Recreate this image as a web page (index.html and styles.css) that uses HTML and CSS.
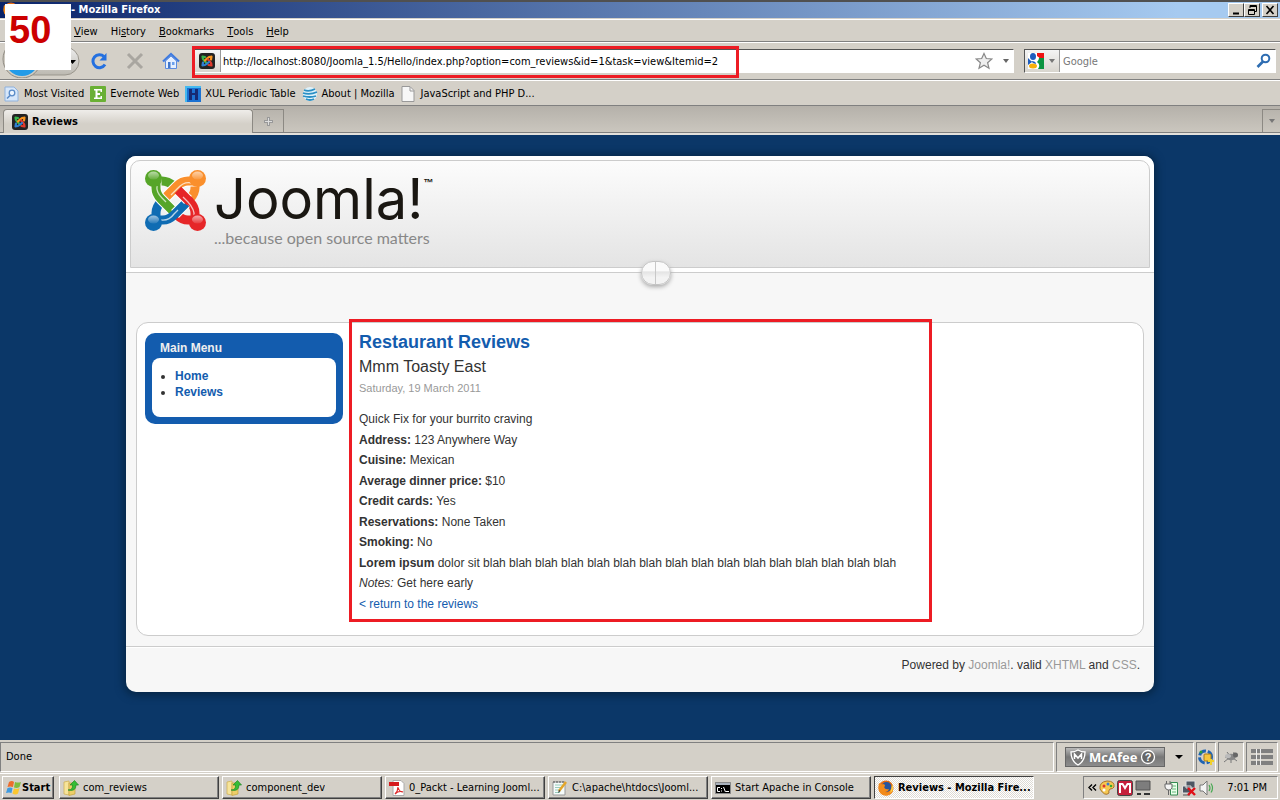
FILE: index.html
```html
<!DOCTYPE html>
<html lang="en">
<head>
<meta charset="utf-8">
<title>Reviews - Mozilla Firefox</title>
<link rel="stylesheet" href="styles.css">
</head>
<body>
<svg class="defs" aria-hidden="true">
  <defs>
    <linearGradient id="ball" x1="0" y1="0" x2="0" y2="1"><stop offset="0" stop-color="#fff" stop-opacity=".6"/><stop offset="1" stop-color="#fff" stop-opacity=".1"/></linearGradient>
    <linearGradient id="key" x1="0" y1="0" x2="0" y2="1"><stop offset="0" stop-color="#eee"/><stop offset="1" stop-color="#bbb8b0"/></linearGradient>
  </defs>
  <symbol id="knot" viewBox="0 0 61 61">
    <g fill="none" stroke-width="9">
      <path stroke="#56a528" d="M8 11H17Q23 11 29 16"/>
      <path stroke="#fa8f2c" d="M50 8V18Q50 23 45 29"/>
      <path stroke="#e62628" d="M52 50H43Q37 50 32 45"/>
      <path stroke="#0f6cb3" d="M11 52V43Q11 37 16 32"/>
      <path stroke="#e62628" d="M50 52V43Q50 37 45 32L34 21"/>
      <path stroke="#fff" stroke-width="11" d="M52 11H43Q37 11 32 16L20 28"/>
      <path stroke="#fa8f2c" d="M52 11H43Q37 11 32 16L20 28"/>
      <path stroke="#fff" stroke-width="11" d="M11 8V18Q11 24 16 29L28 41"/>
      <path stroke="#56a528" d="M11 8V18Q11 24 16 29L28 41"/>
      <path stroke="#fff" stroke-width="11" d="M30 44L41 33"/>
      <path stroke="#0f6cb3" d="M8 50H18Q24 50 29 45L41 33"/>
      <path stroke="#fff" stroke-width="11" d="M43 30L34 21"/>
      <path stroke="#e62628" d="M45 32L33 20"/>
      <g stroke="#fff" stroke-opacity=".7" stroke-width="1.300"><path d="M12 16Q11 22 17 28L21 32M47 13Q39 11 33 18L26 25M49 46Q50 40 43 32L38 27M16 50Q24 51 29 44L33 40"/></g>
    </g>
    <circle cx="8.500" cy="8.500" r="8.500" fill="#56a528"/><circle cx="52.500" cy="8.500" r="8.500" fill="#fa8f2c"/>
    <circle cx="8.500" cy="52.500" r="8.500" fill="#0f6cb3"/><circle cx="52.500" cy="52.500" r="8.500" fill="#e62628"/>
    <g fill="url(#ball)"><ellipse cx="8.500" cy="5.500" rx="5.500" ry="4"/><ellipse cx="52.500" cy="5.500" rx="5.500" ry="4"/><ellipse cx="8.500" cy="49.500" rx="5.500" ry="4"/><ellipse cx="52.500" cy="49.500" rx="5.500" ry="4"/></g>
  </symbol>
  <symbol id="favicon" viewBox="0 0 16 16">
    <rect width="16" height="16" rx="3" fill="#222"/>
    <g fill="none" stroke-width="2.200" stroke-linecap="round">
      <path stroke="#37b34a" d="M3.500 3.500Q3.500 6 5 7.500L8 10.500M3.500 3.500L6 4"/>
      <path stroke="#f8941e" d="M12.500 3.500Q10 3.500 8 5.500L6 7.500M12.500 3.500L12 6.500"/>
      <path stroke="#e23a2c" d="M12.500 12.500Q12.500 10 11 8.500L9 6.500M12.500 12.500L9.500 12"/>
      <path stroke="#2f7fd0" d="M3.500 12.500Q6 12.500 7.500 11L10 9M3.500 12.500L4 9.500"/>
    </g>
  </symbol>
  <symbol id="firefox" viewBox="0 0 16 16">
    <circle cx="8" cy="8" r="7.500" fill="#e26a12"/><circle cx="8.500" cy="7" r="5" fill="#27549c"/>
    <path d="M1 3Q4 5 6 4Q8 6 6 7Q7 10 11 9Q10 12 7 12Q12 14 14 6Q17 12 11 15Q4 17 1 11Q0 7 1 3Z" fill="#f28a1a"/>
    <path d="M14 4Q17 10 12 13Q14 8 14 4Z" fill="#fcd34a"/>
  </symbol>
  <symbol id="folder" viewBox="0 0 16 16">
    <path d="M1 2L6 1V15L1 14Z" fill="#f6e49a" stroke="#cdae4c" stroke-width=".7"/>
    <path d="M6 3H12V14L6 15.500Z" fill="#edcf69" stroke="#c6a23e" stroke-width=".7"/>
    <path d="M5 10Q10 10 9.500 5H7L11.500.500L15.500 5H13Q13 12 5 10Z" fill="#35bd36" stroke="#208a27" stroke-width=".7"/>
  </symbol>
</svg>

<header class="chrome">
  <div class="titlebar">
    <svg class="icon" aria-hidden="true"><use href="#firefox"/></svg>
    <span class="window-title">- Mozilla Firefox</span>
    <div class="window-buttons">
      <button aria-label="Minimize"><svg width="12" height="10"><path d="M3 8.500H9" stroke="#000" stroke-width="2"/></svg></button>
      <button aria-label="Restore"><svg width="12" height="10" fill="none" stroke="#000"><path d="M4 3V.5H10.500V6.500H8M4 1.500H10M2.500 4.500H8.500V9.500H2.500ZM2 5.500H8"/></svg></button>
      <button class="close" aria-label="Close"><svg width="12" height="10"><path d="M2.500 1L9.500 9M9.500 1L2.500 9" stroke="#000" stroke-width="1.600"/></svg></button>
    </div>
  </div>

  <nav class="menubar" aria-label="Application menu">
    <button><u>V</u>iew</button><button>Hi<u>s</u>tory</button><button><u>B</u>ookmarks</button><button><u>T</u>ools</button><button><u>H</u>elp</button>
  </nav>

  <div class="navbar">
    <button class="nav-history" aria-label="Back">
      <svg width="82" height="34"><rect x="20" y="3" width="59" height="28" rx="14" fill="url(#key)" stroke="#9b978e"/><circle cx="22" cy="15" r="19" fill="#d0ccc3" stroke="#8e8a82"/><circle cx="22" cy="15" r="17" fill="#229be8"/><path d="M69 16H76L72.500 20Z"/></svg>
    </button>
    <button class="tool" aria-label="Reload"><svg width="18" height="18"><path d="M14 4.500A6.500 6.500 0 1 0 15 12.500" fill="none" stroke="#2470e0" stroke-width="3"/><path d="M16.500 1V8.500H9.500Z" fill="#2470e0"/></svg></button>
    <button class="tool" aria-label="Stop"><svg width="18" height="18"><path d="M2 2L16 16M16 2L2 16" stroke="#a9a6a0" stroke-width="3"/></svg></button>
    <button class="tool" aria-label="Home"><svg width="18" height="18"><path d="M3.500 9V16.500H14.500V9L9 4Z" fill="#e6f0ff" stroke="#5a8be0"/><path d="M1 9.500L9 2L17 9.500" fill="none" stroke="#3f7be0" stroke-width="2.200"/><path d="M6 10H8.500V16H6Z" fill="#4176cb"/><path d="M10 10H12.500V13H10Z" fill="#6ba0ed"/></svg></button>
    <div class="field address">
      <span class="field-icon"><svg class="icon"><use href="#favicon"/></svg></span>
      <input type="text" aria-label="Location" value="http://localhost:8080/Joomla_1.5/Hello/index.php?option=com_reviews&amp;id=1&amp;task=view&amp;Itemid=2">
      <button aria-label="Bookmark this page"><svg width="18" height="18"><path d="M9 1.500L11.300 6.500L16.800 7L12.600 10.700L14 16.300L9 13.300L4 16.300L5.400 10.700L1.200 7L6.700 6.500Z" fill="#eee" stroke="#888" stroke-width="1.200"/></svg></button>
      <button aria-label="Show history"><svg width="6" height="4"><path d="M0 0H6L3 4Z" fill="#666"/></svg></button>
      <span class="address-mark"></span>
    </div>
    <div class="field search">
      <button class="engine" aria-label="Search engine"><svg width="16" height="16"><rect width="16" height="16" fill="#fff"/><path d="M9 0H16V6H12Q11 4 9 3Z" fill="#e11"/><path d="M11 5H16V16H10Q13 12 9 9Q11 7 11 5Z" fill="#0a9440"/><path d="M0 5L4 9L0 12Z" fill="#1c5bbd"/><ellipse cx="5" cy="3.500" rx="3" ry="3.500" fill="#1c5bbd"/><ellipse cx="5" cy="13" rx="4" ry="2.500" fill="#f7b008"/><path d="M3 8Q8 8 8 11L5 10Z" fill="#1c5bbd"/></svg><svg width="6" height="4"><path d="M0 0H6L3 4Z" fill="#777"/></svg></button>
      <input type="text" aria-label="Search" placeholder="Google">
      <button aria-label="Go"><svg width="16" height="16" fill="none" stroke="#2e6db2"><circle cx="9.500" cy="5.500" r="3.800" stroke-width="2"/><path d="M7 8.500L1.500 14" stroke-width="2.600"/></svg></button>
    </div>
  </div>

  <nav class="bookmarks" aria-label="Bookmarks">
    <a href="#"><svg class="icon" viewBox="0 0 16 16"><path d="M1 1H10L14 5V15H1Z" fill="#d7e7fa" stroke="#8fb2dd"/><circle cx="8" cy="7" r="2.800" fill="#eef6ff" stroke="#5b8cc8" stroke-width="1.300"/><path d="M6 9.500L3 12.500" stroke="#5b8cc8" stroke-width="1.600"/></svg>Most Visited</a>
    <a href="#"><svg class="icon" viewBox="0 0 16 16"><rect width="16" height="16" rx="1" fill="#6ab034"/><path d="M4 3H12V6H10.500V4.500H7.500V7H10V9H7.500V11.500H10.500V10H12V13H4V11.500H5.500V4.500H4Z" fill="#fff"/></svg>Evernote Web</a>
    <a href="#"><svg class="icon" viewBox="0 0 16 16"><rect width="16" height="16" fill="#1b71d2"/><path d="M0 0H16V2H2V16H0Z" fill="#45b9ef"/><path d="M4 3H7V7H10V3H13V14H10V9H7V14H4Z" fill="#172a72"/></svg>XUL Periodic Table</a>
    <a href="#"><svg class="icon" viewBox="0 0 16 16"><circle cx="8" cy="8" r="7" fill="#dff2fb"/><path d="M2 4Q7 6 13 3M1 7Q8 9 15 6M1 10Q8 12 14 10M4 13Q8 15 12 13" fill="none" stroke="#2a8fc4" stroke-width="1.800"/></svg>About | Mozilla</a>
    <a href="#"><svg class="icon" viewBox="0 0 16 16"><path d="M2 .5H10L14 4.500V15.500H2Z" fill="#f7f7f7" stroke="#999"/><path d="M10 1V5H14" fill="none" stroke="#999"/></svg>JavaScript and PHP D...</a>
  </nav>

  <div class="tabs">
    <button class="tab"><svg class="icon"><use href="#favicon"/></svg>Reviews</button>
    <button class="new-tab" aria-label="Open a new tab"><svg width="9" height="9"><path d="M4.500 0V9M0 4.500H9" stroke="#999" stroke-width="3"/><path d="M4.500 1V8M1 4.500H8" stroke="#ddd"/></svg></button>
    <button class="all-tabs" aria-label="List all tabs"><svg width="6" height="4"><path d="M0 0H6L3 4Z" fill="#777"/></svg></button>
  </div>
  <span class="step">50</span>
</header>

<div class="viewport">
  <div class="site">
    <header class="site-header">
      <div class="banner">
        <svg class="logo" aria-hidden="true"><use href="#knot"/></svg>
        <div class="brand">
          <p class="brand-name">Joomla!<sup>™</sup></p>
          <p class="slogan">...because open source matters</p>
        </div>
      </div>
      <span class="pill"></span>
    </header>
    <main class="panel">
      <aside class="module">
        <h3>Main Menu</h3>
        <ul><li><a href="#">Home</a></li><li><a href="#">Reviews</a></li></ul>
      </aside>
      <article class="review">
        <h1>Restaurant Reviews</h1>
        <h2>Mmm Toasty East</h2>
        <p class="date">Saturday, 19 March 2011</p>
        <div class="details">
          <p>Quick Fix for your burrito craving</p>
          <p><b>Address:</b> 123 Anywhere Way</p>
          <p><b>Cuisine:</b> Mexican</p>
          <p><b>Average dinner price:</b> $10</p>
          <p><b>Credit cards:</b> Yes</p>
          <p><b>Reservations:</b> None Taken</p>
          <p><b>Smoking:</b> No</p>
          <p><b>Lorem ipsum</b> dolor sit blah blah blah blah blah blah blah blah blah blah blah blah blah blah blah blah</p>
          <p><i>Notes:</i> Get here early</p>
          <p><a href="#">&lt; return to the reviews</a></p>
        </div>
        <span class="review-mark"></span>
      </article>
    </main>
    <footer class="site-footer">Powered by <a href="#">Joomla!</a>. valid <a href="#">XHTML</a> and <a href="#">CSS</a>.</footer>
  </div>
</div>

<div class="statusbar">
  <span class="pane grow">Done</span>
  <span class="pane mcafee-pane">
    <button class="mcafee"><svg width="16" height="17"><path d="M1 3Q5 3 8 1Q11 3 15 3Q15 12 8 16Q1 12 1 3Z" fill="#777" stroke="#fff" stroke-width="1.300"/><path d="M4.500 10V5L8 9L11.500 5V10" fill="none" stroke="#fff" stroke-width="1.500"/></svg>McAfee<svg width="16" height="16"><circle cx="8" cy="8" r="6.500" fill="#666" stroke="#fff" stroke-width="1.300"/><text x="8" y="12" text-anchor="middle" fill="#fff">?</text></svg></button>
    <button aria-label="McAfee menu"><svg width="8" height="4"><path d="M0 0H8L4 4Z"/></svg></button>
  </span>
  <span class="pane"><svg class="icon" viewBox="0 0 16 16"><circle cx="7.500" cy="8" r="6" fill="none" stroke="#1d63b4" stroke-width="3" stroke-dasharray="8 2"/><rect x="6" y="5" width="7" height="7" rx="1" fill="#f4c63e" stroke="#a87b18"/><path d="M10 12H16M13 10V16" stroke="#f0d02b" stroke-width="2"/><circle cx="3" cy="3" r="1.500" fill="#2c9c42"/></svg></span>
  <span class="pane bug"><svg class="icon" viewBox="0 0 16 16"><g stroke="#777" fill="none"><path d="M1 13L6 9M4 3L7 7M11 3L10 7M14 12L10 9M2 8H6M8 14V10"/></g><ellipse cx="8" cy="8" rx="4.500" ry="3.300" fill="#888"/><circle cx="12.500" cy="6" r="2.500" fill="#666"/><ellipse cx="5" cy="7" rx="3" ry="2" fill="#bbb"/></svg></span>
  <span class="pane"><svg width="24" height="16"><path d="M1 0H23V4H1ZM1 6H23V10H1ZM1 12H23V16H1Z" fill="#808080"/><path d="M6.500 0V16M10.500 0V16" stroke="#eee"/></svg></span>
</div>

<footer class="taskbar">
  <button class="start"><svg class="icon" viewBox="0 0 16 16"><path d="M3 2Q6 0 8 2L7 7Q4 6 1.500 7Z" fill="#ed6d2c"/><path d="M9 2Q12 3 15 2L13.500 7Q11 8.500 8 7.500Z" fill="#7fbd3e"/><path d="M1.500 8Q4 7 6.500 8L5.500 13Q3 12 0 13Z" fill="#3f9be0"/><path d="M8 8.500Q11 9.500 13.500 8L12 13.500Q9.500 15.500 6.500 13.500Z" fill="#fbc72e"/></svg>Start</button>
  <button class="task"><svg class="icon"><use href="#folder"/></svg><span>com_reviews</span></button>
  <button class="task"><svg class="icon"><use href="#folder"/></svg><span>component_dev</span></button>
  <button class="task"><svg class="icon" viewBox="0 0 16 16"><path d="M4 .5H12L15 3.500V15.500H4Z" fill="#fff" stroke="#aaa"/><path d="M0 2H10V6H0Z" fill="#d51a1d"/><path d="M6 14Q9 11 9 7Q10 12 14 12Q10 10 6 14Z" fill="none" stroke="#df2a2a" stroke-width="1.200"/></svg><span>0_Packt - Learning Jooml...</span></button>
  <button class="task"><svg class="icon" viewBox="0 0 16 16"><path d="M1 2H13V15H1Z" fill="#f5fbfa" stroke="#999"/><path d="M3 5H11M3 7.500H11M3 10H9M3 12.500H8" stroke="#9cb"/><path d="M2 1V3M5 1V3M8 1V3M11 1V3" stroke="#555"/><path d="M7 11L14 2" stroke="#e4a529" stroke-width="2.500"/><path d="M6 13L7 10L8.500 11Z" fill="#333"/></svg><span>C:\apache\htdocs\Jooml...</span></button>
  <button class="task"><svg class="icon" viewBox="0 0 16 16"><path d="M.5 2.500H15.500V13.500H.5Z" stroke="#888"/><path d="M1 3H15V5H1Z" fill="#a9b2bd"/><path d="M5 7.500H2.500V11.500H5M6.500 8V9M6.500 10.500V11.500M8.500 7L10.500 12M11 11.500H14" fill="none" stroke="#fff"/></svg><span>Start Apache in Console</span></button>
  <button class="task active"><svg class="icon"><use href="#firefox"/></svg><span>Reviews - Mozilla Fire...</span></button>
  <div class="tray">
    <button aria-label="Hide icons"><svg width="9" height="7" fill="none" stroke="#000" stroke-width="1.400"><path d="M4 .5L1 3.500L4 6.500M8 .5L5 3.500L8 6.500"/></svg></button>
    <svg class="icon" viewBox="0 0 16 16"><path d="M1 9Q0 2 8 1Q16 1 15 7Q14 9 11 9Q9 11 10 13Q6 17 1 9Z" fill="#f6c850" stroke="#a8752d"/><circle cx="5" cy="6" r="1.500" fill="#d33"/><circle cx="9" cy="4" r="1.500" fill="#3a7bd0"/><circle cx="12" cy="6" r="1.300" fill="#3a3"/><circle cx="5" cy="10" r="1.500" fill="#fff"/></svg>
    <svg class="icon" viewBox="0 0 16 16"><rect x=".5" y=".5" width="15" height="15" rx="2" fill="#c6203c" stroke="#444"/><path d="M3 13V4H5.500L8 8L10.500 4H13V13" fill="none" stroke="#fff" stroke-width="2"/></svg>
    <svg class="icon" viewBox="0 0 16 16"><path d="M1 1H15V10H1Z" fill="#7d7d7d" stroke="#555"/><path d="M2 14H6M9 14H15" stroke="#333" stroke-width="2"/></svg>
    <svg class="icon after-gap" viewBox="0 0 16 16"><path d="M7.500 2.500H14.500V15H7.500Z" fill="#eaffea" stroke="#348a51"/><path d="M9 6H13M9 9H13M9 12H13" stroke="#64b87b"/><path d="M2 4H9V8Q8 10 6 10H5Q2 9 2 7ZM3.500 1V4M7 1V4M5.500 10V15" fill="#f5f5f5" stroke="#666"/></svg>
    <svg class="icon" viewBox="0 0 16 16"><path d="M5 1H14V8H5ZM1.500 6H10V13H1.500Z" fill="#4d5763" stroke="#ddd"/><path d="M2 15H9" stroke="#555"/><path d="M7 8L14 15M14 8L7 15" stroke="#e00f16" stroke-width="2.400"/></svg>
    <svg class="icon" viewBox="0 0 16 16"><path d="M1 5H4L8 1V15L4 11H1Z" fill="#f4f4f4" stroke="#777"/><path d="M10 5Q12 8 10 11M12 3.500Q15 8 12 12.500" fill="none" stroke="#4aa954" stroke-width="1.200"/></svg>
    <time>7:01 PM</time>
  </div>
</footer>
</body>
</html>
```
FILE: styles.css
```css
:root {
  --face: #d4d0c8;
  --shadow: #808080;
  --ui: "DejaVu Sans Condensed", "DejaVu Sans", sans-serif;
  --blue: #135cae;
  --rule: #cccccc;
  --mark: #ed1c24;
}
* { box-sizing: border-box; }
body {
  margin: 0;
  min-height: 100vh;
  display: flex;
  flex-direction: column;
  background: var(--face);
  color: #000;
  font: 11px/14px var(--ui);
}
.defs { position: absolute; width: 0; height: 0; }
button { margin: 0; padding: 0; border: 0; background: none; color: inherit; font: inherit; display: flex; align-items: center; }
input { border: 0; padding: 2px 0 0; background: none; font: inherit; color: #000; outline: 0; min-width: 0; flex: 1; }
h1, h2, h3, p, ul { margin: 0; padding: 0; }
a { text-decoration: none; color: inherit; }
svg { flex: none; display: block; }
.icon { width: 16px; height: 16px; }

/* Browser chrome */
.chrome { position: relative; }
.titlebar {
  display: flex;
  align-items: center;
  gap: 52px;
  height: 18px;
  padding: 0 2px 0 3px;
  border-top: 2px solid #505050;
  background: linear-gradient(90deg, #0a246a, #a6caf0 92%);
  color: #fff;
  font-weight: bold;
}
.window-buttons { display: flex; margin-left: auto; }
.window-buttons button {
  width: 16px;
  height: 14px;
  justify-content: center;
  background: var(--face);
  border: 1px solid;
  border-color: #fff #404040 #404040 #fff;
}
.window-buttons .close { margin-left: 2px; }
.menubar {
  display: flex;
  align-items: center;
  gap: 13px;
  height: 24px;
  padding: 4px 8px 0 74px;
  border-bottom: 1px solid var(--shadow);
  box-shadow: inset 0 1px var(--face), inset 0 2px #fff;
}
.navbar {
  display: flex;
  align-items: center;
  gap: 10px;
  height: 38px;
  padding-right: 4px;
  border-top: 1px solid #fff;
  border-bottom: 1px solid var(--shadow);
}
.tool { width: 26px; height: 26px; justify-content: center; }
.nav-history { margin-right: -6px; }
.field {
  display: flex;
  align-items: center;
  height: 24px;
  background: #fff;
  border: 1px solid;
  border-color: #555 #fff #fff #555;
}
.address { position: relative; flex: 1; gap: 10px; margin-left: -1px; padding-right: 4px; }
.address input { margin-left: -8px; }
.field-icon {
  align-self: stretch;
  display: flex;
  align-items: center;
  padding: 0 5px;
  border-right: 1px solid #999;
  background: linear-gradient(#f4f4f4, #d8d5ce);
}
.address-mark {
  position: absolute;
  top: -4px;
  left: -2px;
  width: 547px;
  height: 32px;
  border: 3px solid var(--mark);
  pointer-events: none;
}
.search { width: 252px; padding-right: 3px; }
.search input { margin-left: 3px; }
.search input::placeholder { color: #777; opacity: 1; }
.engine { align-self: stretch; gap: 5px; padding: 0 4px 0 3px; border-right: 1px solid #999; background: linear-gradient(#f4f4f4, #d8d5ce); }
.bookmarks {
  display: flex;
  align-items: center;
  gap: 6px;
  height: 26px;
  padding: 2px 4px 0;
  border-top: 1px solid #fff;
  border-bottom: 1px solid var(--shadow);
}
.bookmarks a { display: flex; align-items: center; gap: 4px; }
.tabs {
  display: flex;
  align-items: flex-end;
  height: 29px;
  padding: 2px 0 0 3px;
  border-bottom: 2px solid #e4e1dc;
  box-shadow: inset 0 -1px var(--shadow);
  background: linear-gradient(#b5b1aa, #cbc7bf);
}
.tabs button { height: 23px; margin-bottom: 1px; border: 1px solid #8c8983; border-bottom: 0; justify-content: center; }
.tabs .tab {
  width: 250px;
  height: 24px;
  margin-bottom: 0;
  justify-content: flex-start;
  gap: 4px;
  padding-left: 8px;
  border-radius: 4px 4px 0 0;
  background: linear-gradient(#efedea, var(--face) 60%);
  font-weight: bold;
}
.tabs .new-tab { width: 31px; border-left: 0; }
.tabs .all-tabs { width: 18px; margin-left: auto; border-right: 0; }
.step {
  position: absolute;
  top: 4px;
  left: 5px;
  width: 66px;
  height: 66px;
  padding: 5px 4px;
  background: #fff;
  color: #c00;
  font: bold 38px/42px "Liberation Sans", Arial, sans-serif;
}

/* Web page */
.viewport {
  flex: 1;
  padding: 21px 8px 48px;
  background: #0b3768;
  font: 12px/16px "Liberation Sans", Arial, sans-serif;
  color: #333;
}
.site {
  max-width: 1028px;
  margin: 0 auto;
  border-radius: 10px;
  background: #f7f7f7;
  box-shadow: 0 1px 8px 2px #062544;
}
.site-header {
  position: relative;
  padding: 4px;
  border-radius: 10px 10px 0 0;
  border-bottom: 1px solid var(--rule);
  background: #fff;
}
.banner {
  display: flex;
  gap: 8px;
  padding: 9px 14px 20px;
  border: 1px solid var(--rule);
  border-radius: 10px 10px 0 0;
  background: linear-gradient(#fcfcfc, #e4e4e4);
}
.logo { width: 61px; height: 61px; }
.brand-name { display: flex; align-items: flex-start; color: #1a1712; font: 400 56px/58px Inter, "DejaVu Sans", sans-serif; }
.brand-name sup { font: bold 10px/26px "Liberation Sans", sans-serif; }
.slogan { color: #888; font: 16px/19px Lato, sans-serif; }
.pill {
  position: absolute;
  bottom: -13px;
  left: calc(50% + 1px);
  width: 30px;
  height: 24px;
  border: 1px solid #c4c4c4;
  border-radius: 12px;
  background: linear-gradient(90deg, transparent 13px, #c8c8c8 13px 14px, transparent 14px), linear-gradient(#fafafa 40%, #e4e4e4 45%, #f3f3f3 70%);
  box-shadow: 0 2px 4px #aaa;
}
.panel {
  display: flex;
  align-items: flex-start;
  gap: 16px;
  margin: 49px 10px 10px;
  padding: 10px 8px 21px;
  border: 1px solid var(--rule);
  border-radius: 12px;
  background: #fff;
}
.module { width: 198px; padding: 6px 7px 7px; border-radius: 10px; background: var(--blue); }
.module h3 { padding: 1px 8px 2px; color: #eee; font-size: 12px; line-height: 16px; }
.module ul { padding: 10px 12px 17px 23px; border-radius: 8px; background: #fff; font-weight: bold; }
.module a, .review a { color: var(--blue); }
.review { position: relative; flex: 1; }
.review h1 { color: var(--blue); font-size: 18px; line-height: 18px; }
.review h2 { padding: 6px 0 5px; font-size: 16px; font-weight: normal; line-height: 20px; }
.date { color: #999; font-size: 11px; line-height: 12px; }
.details { display: grid; grid-auto-rows: 1fr; align-items: center; min-height: 205px; margin-top: 15px; }
.review-mark {
  position: absolute;
  top: -14px;
  left: -10px;
  width: 583px;
  height: 303px;
  border: 3px solid var(--mark);
  pointer-events: none;
}
.site-footer {
  padding: 10px 14px 19px;
  border-top: 1px solid var(--rule);
  box-shadow: inset 0 1px #fff;
  text-align: right;
  font-size: 12px;
}
.site-footer a { color: #999; }

/* Status bar */
.statusbar {
  display: flex;
  gap: 2px;
  padding: 2px 2px 0 0;
  border-bottom: 1px solid var(--face);
}
.pane {
  display: flex;
  align-items: center;
  min-height: 30px;
  padding: 0 1px;
  border: 1px solid;
  border-color: var(--shadow) #fff #fff var(--shadow);
}
.pane:last-child { padding: 0 3px; }
.grow { flex: 1; padding-left: 5px; }
.mcafee-pane { gap: 10px; padding: 0 10px 0 8px; }
.bug { padding: 0 4px; }
.mcafee {
  gap: 3px;
  width: 100px;
  height: 20px;
  padding: 0 4px;
  border: 1px solid #666;
  background: linear-gradient(#b8b8b8, #777 50%, #8c8c8c);
  color: #fff;
  font: bold 13px/18px "Open Sans", sans-serif;
}
.mcafee text { font: bold 11px "Liberation Sans", sans-serif; }

/* Taskbar */
.taskbar { display: flex; align-items: center; gap: 3px; padding: 2px 2px 1px; border-top: 1px solid #fff; }
.start, .task {
  height: 23px;
  padding: 0 3px;
  border: 1px solid;
  border-color: #fff #404040 #404040 #fff;
  box-shadow: inset -1px -1px var(--shadow);
}
.start { width: 52px; margin-right: 2px; font-weight: bold; }
.task { flex: 0 1 160px; min-width: 0; gap: 4px; }
.task span { overflow: hidden; white-space: nowrap; }
.task.active {
  border-color: #404040 #fff #fff #404040;
  background: repeating-conic-gradient(#fff 0 25%, #dedbd5 0 50%) 0 0 / 2px 2px;
  box-shadow: none;
  font-weight: bold;
}
.tray {
  display: flex;
  align-items: center;
  gap: 2px;
  width: 195px;
  height: 23px;
  margin-left: auto;
  padding: 0 10px 0 4px;
  border: 1px solid;
  border-color: var(--shadow) #fff #fff var(--shadow);
}
.after-gap { margin-left: 10px; }
.tray time { margin-left: auto; white-space: nowrap; }
```
